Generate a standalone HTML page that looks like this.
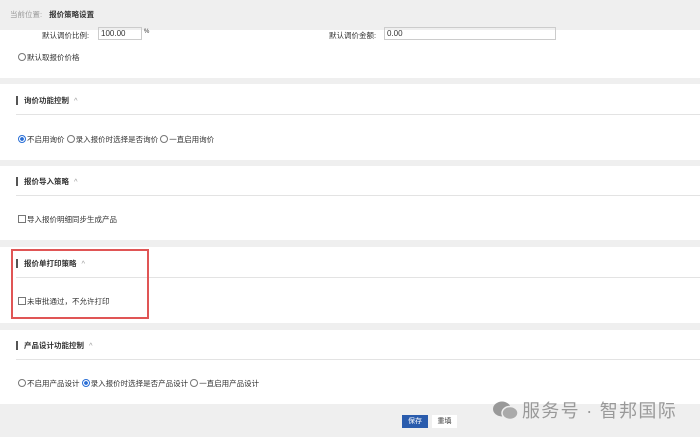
<html><head><style>
body{margin:0;width:700px;height:437px;background:#efefef;font-family:"Liberation Sans","Noto Sans CJK SC",sans-serif;font-size:7.5px;color:#333;position:relative;overflow:hidden}
.a{position:absolute}
.p{position:absolute;left:0;width:700px;background:#fff}
.h{position:absolute;left:16px;font-weight:bold;font-size:7.5px;border-left:2px solid #555;padding-left:6px;line-height:9px}
.h span{font-weight:normal;color:#999;margin-left:5px}
.ln{position:absolute;left:16px;right:0;height:1px;background:#e3e3e3}
.r{display:inline-block;width:6px;height:6px;border:1px solid #777;border-radius:50%;vertical-align:-1px;margin-right:1px;background:#fff}
.r.on{border-color:#2a6fd6;background:radial-gradient(#2a6fd6 40%,#fff 50%)}
.c{display:inline-block;width:6px;height:6px;border:1px solid #777;vertical-align:-1px;margin-right:1px}
</style></head><body>
<div class="a" style="left:10px;top:9px;font-size:7.5px;color:#999">当前位置: <b style="color:#333;margin-left:5px">报价策略设置</b></div>
<div class="p" style="top:30px;height:48px">
 <div class="a" style="left:42px;top:0px">默认调价比例:</div>
 <div class="a" style="left:98px;top:-3px;width:40px;height:11px;border:1px solid #ccc;font-size:8px;padding-left:2px;line-height:11px">100.00</div>
 <div class="a" style="left:144px;top:-1px;font-size:6px">%</div>
 <div class="a" style="left:329px;top:0px">默认调价金额:</div>
 <div class="a" style="left:384px;top:-3px;width:168px;height:11px;border:1px solid #ccc;padding-left:2px;line-height:11px;font-size:8px">0.00</div>
 <div class="a" style="left:18px;top:22px"><i class="r"></i>默认取报价价格</div>
</div>
<div class="p" style="top:84px;height:76px">
 <div class="h" style="top:12px">询价功能控制<span>^</span></div><div class="ln" style="top:30px"></div>
 <div class="a" style="left:18px;top:50px"><i class="r on"></i>不启用询价 <i class="r"></i>录入报价时选择是否询价 <i class="r"></i>一直启用询价</div>
</div>
<div class="p" style="top:166px;height:74px">
 <div class="h" style="top:11px">报价导入策略<span>^</span></div><div class="ln" style="top:29px"></div>
 <div class="a" style="left:18px;top:48px"><i class="c"></i>导入报价明细同步生成产品</div>
</div>
<div class="p" style="top:247px;height:76px">
 <div class="h" style="top:12px">报价单打印策略<span>^</span></div><div class="ln" style="top:30px"></div>
 <div class="a" style="left:18px;top:49px"><i class="c"></i>未审批通过，不允许打印</div>
</div>
<div class="a" style="left:11px;top:249px;width:134px;height:66px;border:2px solid #e05555"></div>
<div class="p" style="top:330px;height:74px">
 <div class="h" style="top:11px">产品设计功能控制<span>^</span></div><div class="ln" style="top:29px"></div>
 <div class="a" style="left:18px;top:48px"><i class="r"></i>不启用产品设计 <i class="r on"></i>录入报价时选择是否产品设计 <i class="r"></i>一直启用产品设计</div>
</div>
<div class="a" style="left:402px;top:415px;width:26px;height:13px;background:#2a5cad;color:#fff;font-size:7px;text-align:center;line-height:13px">保存</div>
<div class="a" style="left:432px;top:415px;width:25px;height:13px;background:#fff;font-size:7px;text-align:center;line-height:13px">重填</div>
<svg class="a" style="left:492px;top:400px" width="28" height="22" viewBox="0 0 28 22"><ellipse cx="10" cy="9" rx="9" ry="7.5" fill="#999"/><ellipse cx="18" cy="13" rx="8" ry="6.5" fill="#aaa" stroke="#efefef" stroke-width="1.5"/></svg>
<div class="a" style="left:522px;top:397px;font-size:18px;color:#999;letter-spacing:1.3px">服务号 · 智邦国际</div>
</body></html>
